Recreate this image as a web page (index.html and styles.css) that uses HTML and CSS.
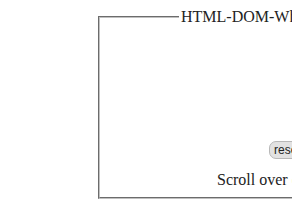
FILE: index.html
```html
<!DOCTYPE html>
<html lang="en">

<head>
    <meta charset="UTF-8">
    <title>HTML-DOM-WheelEvent</title>
    <link rel="stylesheet" href="styles.css">
</head>

<body>
    <fieldset class="frame">
        <legend class="title">HTML-DOM-WheelEvent</legend>
        <div class="area" id="area"></div>
        <div class="controls">
            <button class="reset-btn" onclick="resetArea()">reset</button>
        </div>
        <p class="hint">Scroll over div to see the delta values</p>
    </fieldset>
    <script>
        function resetArea() {
            document.getElementById('area').textContent = '';
        }
    </script>
</body>

</html>
```

FILE: styles.css
```css
body {
    margin: 8px;
    font-family: "Liberation Serif", "Times New Roman", serif;
    font-size: 16px;
    background-color: #fff;
    color: #222;
    overflow: hidden;
}

.frame {
    margin: 0 0 0 90px;
    width: 520px;
    border: 2px groove #c0c0c0;
    padding: 6px 12px 8px;
}

.title {
    margin-left: 67px;
    padding: 0 2px;
}

.area {
    height: 108px;
}

.controls {
    padding-left: 157px;
}

.reset-btn {
    font-family: "Liberation Sans", Arial, sans-serif;
    font-size: 12px;
    line-height: 14px;
    padding: 1px 4px;
    background-color: #e2e2e2;
    border: 1px solid #b8b8b8;
    border-radius: 7px;
    color: #222;
}

.hint {
    margin: 12px 0 0 105px;
}
```
